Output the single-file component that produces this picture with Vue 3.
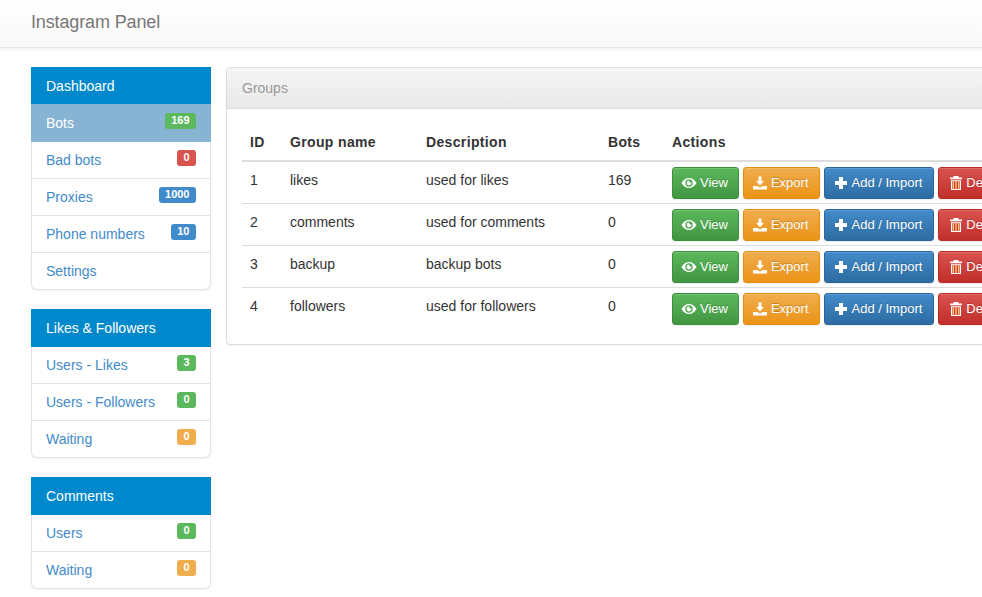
<script setup>
const groups = [
  { title: 'Dashboard', items: [
    { label: 'Bots', badge: '169', color: 'green', active: true },
    { label: 'Bad bots', badge: '0', color: 'red' },
    { label: 'Proxies', badge: '1000', color: 'blue' },
    { label: 'Phone numbers', badge: '10', color: 'blue' },
    { label: 'Settings' },
  ] },
  { title: 'Likes & Followers', items: [
    { label: 'Users - Likes', badge: '3', color: 'green' },
    { label: 'Users - Followers', badge: '0', color: 'green' },
    { label: 'Waiting', badge: '0', color: 'orange' },
  ] },
  { title: 'Comments', items: [
    { label: 'Users', badge: '0', color: 'green' },
    { label: 'Waiting', badge: '0', color: 'orange' },
  ] },
]
const rows = [
  { id: 1, name: 'likes', desc: 'used for likes', bots: 169 },
  { id: 2, name: 'comments', desc: 'used for comments', bots: 0 },
  { id: 3, name: 'backup', desc: 'backup bots', bots: 0 },
  { id: 4, name: 'followers', desc: 'used for followers', bots: 0 },
]
</script>

<template>
  <div class="page">
    <header class="navbar"><span class="brand">Instagram Panel</span></header>
    <div class="layout">
      <aside class="sidebar">
        <nav v-for="g in groups" :key="g.title" class="menu">
          <div class="menu-title">{{ g.title }}</div>
          <a v-for="it in g.items" :key="it.label" class="menu-item" :class="{ active: it.active }">
            <span>{{ it.label }}</span>
            <span v-if="it.badge" class="badge" :class="it.color">{{ it.badge }}</span>
          </a>
        </nav>
      </aside>
      <section class="panel">
        <div class="panel-head">Groups</div>
        <div class="panel-body">
          <table>
            <colgroup>
              <col class="c1" /><col class="c2" /><col class="c3" /><col class="c4" /><col class="c5" />
            </colgroup>
            <thead>
              <tr><th>ID</th><th>Group name</th><th>Description</th><th>Bots</th><th>Actions</th></tr>
            </thead>
            <tbody>
              <tr v-for="r in rows" :key="r.id">
                <td>{{ r.id }}</td>
                <td>{{ r.name }}</td>
                <td>{{ r.desc }}</td>
                <td>{{ r.bots }}</td>
                <td class="actions">
                  <div class="btns">
                    <button class="btn view">
                      <svg viewBox="0 0 14 14" width="14" height="14" class="ico"><path fill="currentColor" fill-rule="evenodd" d="M-.5 7C1.500 3.700 4.200 2 7 2s5.500 1.700 7.500 5C12.500 10.300 9.800 12 7 12S1.500 10.300-.5 7zM7 3.300a3.700 3.700 0 1 0 0 7.400 3.700 3.700 0 0 0 0-7.400z"/><path fill="currentColor" d="M7 4.600a2.400 2.400 0 1 0 2.400 2.400c0-.4-.1-.7-.3-1-.2.300-.5.500-.8.500-.6 0-1-.5-1-1 0-.3.100-.6.300-.8-.2-.1-.4-.1-.6-.1z"/></svg>
                      View
                    </button>
                    <button class="btn export">
                      <svg viewBox="0 0 14 14" width="14" height="14" class="ico"><path fill="currentColor" d="M5.500.5h3v4.500h2.500L7 9.500 3 5h2.500zM0 10h4.500L7 11.500 9.500 10H14v3.500H0z"/></svg>
                      Export
                    </button>
                    <button class="btn add">
                      <svg viewBox="0 0 14 14" width="14" height="14" class="ico"><path fill="currentColor" d="M5 1h4v4h4v4H9v4H5V9H1V5h4z"/></svg>
                      Add / Import
                    </button>
                    <button class="btn del">
                      <svg viewBox="0 0 14 14" width="14" height="14" class="ico"><path fill="currentColor" d="M5.500 0h5v1.500H14V3.200H2V1.500h3.500z"/><path fill="currentColor" fill-rule="evenodd" d="M3 4.200h10V14H3zm1 1V13h8V5.200z"/><path fill="#f6c47c" d="M4.500 5.200h1.500V13H4.500zm2.800 0h1.400V13H7.300zm2.700 0h1.500V13H10z"/></svg>
                      Delete
                    </button>
                  </div>
                </td>
              </tr>
            </tbody>
          </table>
        </div>
      </section>
    </div>
  </div>
</template>

<style>
html, body { margin: 0; overflow: hidden; background: #fff; }
</style>

<style scoped>
.page {
  width: 982px;
  height: 597px;
  overflow: hidden;
  font-family: "Liberation Sans", Arial, sans-serif;
  font-size: 14px;
  line-height: 20px;
  color: #333;
}
.navbar {
  box-sizing: border-box;
  height: 48px;
  padding: 12px 31px 0;
  background: linear-gradient(to bottom, #fff, #f8f8f8);
  border-bottom: 1px solid #e7e7e7;
  box-shadow: 0 1px 5px rgba(0, 0, 0, .08);
}
.brand { font-size: 18px; color: #777; letter-spacing: -.13px; }
.layout {
  display: flex;
  align-items: flex-start;
  gap: 15px;
  padding: 19px 0 0 31px;
}
.sidebar {
  flex: 0 0 180px;
  display: flex;
  flex-direction: column;
  gap: 19px;
}
.menu { display: flex; flex-direction: column; }
.menu-title {
  box-sizing: border-box;
  height: 38px;
  padding: 9px 15px;
  background: #0088cc;
  color: #fff;
}
.menu-item {
  box-sizing: border-box;
  height: 37px;
  padding: 8px 14px;
  display: flex;
  justify-content: space-between;
  align-items: flex-start;
  color: #428bca;
  background: #fff;
  border: 1px solid #e3e3e3;
  border-top: 0;
}
.menu-item:last-child {
  border-radius: 0 0 6px 6px;
  box-shadow: 0 1px 2px rgba(0, 0, 0, .05);
}
.menu-item.active {
  height: 38px;
  margin-top: -1px;
  position: relative;
  padding-top: 9px;
  background: #87b4d2;
  color: #fff;
  border-color: #87b4d2;
}
.badge {
  box-sizing: border-box;
  height: 16px;
  min-width: 19px;
  padding: 0 6.5px;
  border-radius: 3px;
  font-size: 11px;
  font-weight: bold;
  line-height: 14px;
  text-align: center;
  color: #fff;
}
.green { background: #5cb85c; }
.red { background: #d9534f; }
.blue { background: #428bca; }
.orange { background: #f0ad4e; }
.panel {
  flex: 0 0 860px;
  box-sizing: border-box;
  height: 278px;
  background: #fff;
  border: 1px solid #ddd;
  border-radius: 4px;
  box-shadow: 0 1px 2px rgba(0, 0, 0, .05);
}
.panel-head {
  box-sizing: border-box;
  height: 41px;
  padding: 10px 15px;
  color: #999;
  background: linear-gradient(to bottom, #f5f5f5, #e8e8e8);
  border-bottom: 1px solid #ddd;
  border-radius: 3px 3px 0 0;
}
.panel-body { padding: 15px; }
table { border-collapse: separate; border-spacing: 0; table-layout: fixed; width: 862px; }
.c1 { width: 40px; }
.c2 { width: 136px; }
.c3 { width: 182px; }
.c4 { width: 64px; }
.c5 { width: 440px; }
th {
  box-sizing: border-box;
  height: 38px;
  padding: 8px;
  text-align: left;
  vertical-align: top;
  font-weight: bold;
  letter-spacing: .35px;
  border-bottom: 2px solid #ddd;
}
td {
  box-sizing: border-box;
  height: 42px;
  padding: 8px;
  vertical-align: top;
  border-top: 1px solid #ddd;
}
tbody tr:first-child td { border-top: 0; height: 41px; }
td.actions { padding: 5px 8px 4px; }
.btns { display: flex; gap: 4px; }
.btn {
  box-sizing: border-box;
  height: 32px;
  padding: 0 10px 0 9px;
  display: inline-flex;
  align-items: center;
  gap: 4px;
  flex: none;
  font: 13px/18px "Liberation Sans", Arial, sans-serif;
  color: #fff;
  border: 1px solid;
  border-radius: 3px;
  text-shadow: 0 -1px 0 rgba(0, 0, 0, .2);
  box-shadow: inset 0 1px 0 rgba(255, 255, 255, .15), 0 1px 1px rgba(0, 0, 0, .075);
}
.ico { flex: none; overflow: visible; }
.view { background: linear-gradient(to bottom, #5cb85c, #419641); border-color: #3e8f3e; }
.export { background: linear-gradient(to bottom, #f0ad4e, #eb9316); border-color: #e38d13; }
.add { padding-right: 11px; background: linear-gradient(to bottom, #428bca, #2d6ca2); border-color: #2b669a; }
.del { background: linear-gradient(to bottom, #d9534f, #c12e2a); border-color: #b92c28; }
</style>
